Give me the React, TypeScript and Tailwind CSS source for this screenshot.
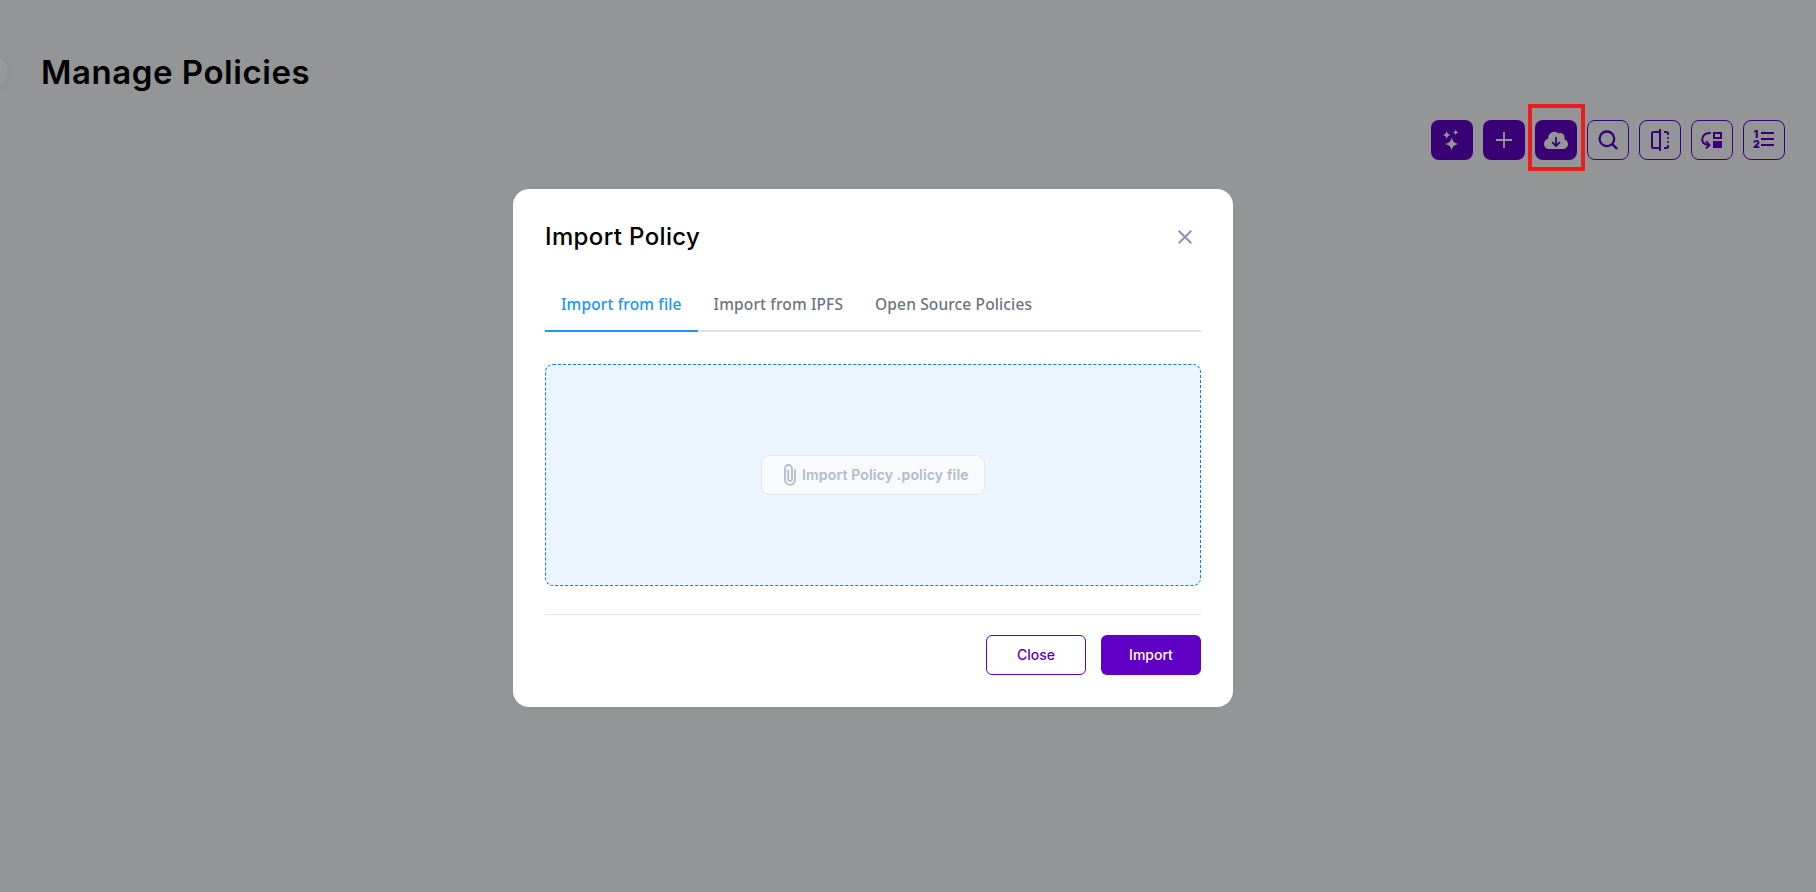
import type { ReactNode } from 'react';

const line = {
  fill: 'none',
  stroke: 'currentColor',
  strokeWidth: 2,
} as const;

function Icon({ children }: { children: ReactNode }) {
  return (
    <svg className="size-6 shrink-0" viewBox="0 0 24 24" fill="currentColor">
      {children}
    </svg>
  );
}

function SparklesIcon() {
  return (
    <Icon>
      <path d="M11.7 9.3 C12.8 13.7 13.8 14.9 18.3 16 C13.8 17.1 12.8 18.2 11.7 22.6 C10.6 18.2 9.6 17.1 5.1 16 C9.6 14.9 10.6 13.7 11.7 9.3Z" />
      <path d="M6.7 3 C7.4 5.5 8.2 6.3 10.7 7 C8.2 7.7 7.4 8.5 6.7 11 C6 8.5 5.2 7.7 2.7 7 C5.2 6.3 6 5.5 6.7 3Z" />
      <path d="M15.7 1.4 C16.2 3.3 16.7 3.8 18.6 4.3 C16.7 4.8 16.2 5.3 15.7 7.2 C15.2 5.3 14.7 4.8 12.8 4.3 C14.7 3.8 15.2 3.3 15.7 1.4Z" />
    </Icon>
  );
}

function PlusIcon() {
  return (
    <Icon>
      <path d="M12 4v16M4 12h16" {...line} strokeWidth={1.8} />
    </Icon>
  );
}

function CloudDownloadIcon() {
  return (
    <Icon>
      <path
        fillRule="evenodd"
        d="M5.3 21 C2.3 21 0 18.7 0 15.9 C0 13.3 1.8 11.2 4.2 10.8 C4 6.8 6.8 3.8 10.4 3.8 C12 3.8 13.4 4.4 14.4 5.4 C17.6 4.2 20.6 6.4 20.6 9.4 C20.6 10 20.5 10.6 20.3 11.2 C22.5 11.8 24 13.7 24 16 C24 18.8 21.8 21 19 21Z M11.1 9 V15.7 L8.7 13.4 L7.4 14.7 L12 19.2 L16.6 14.7 L15.3 13.4 L12.9 15.7 V9Z"
      />
    </Icon>
  );
}

function SearchIcon() {
  return (
    <Icon>
      <circle cx="10.9" cy="10.8" r="7.3" {...line} strokeWidth={2.3} />
      <path d="M16.2 16.1 L21.2 21" {...line} strokeWidth={2.4} />
    </Icon>
  );
}

function CompareIcon() {
  return (
    <Icon>
      <path d="M12 1v22" {...line} />
      <path d="M12 4H5.6A1.6 1.6 0 0 0 4 5.6V18.4A1.6 1.6 0 0 0 5.6 20H12" {...line} />
      <path
        d="M16 4H18.4A1.6 1.6 0 0 1 20 5.6V7M20 9.2V10.8M20 13.2V14.8M20 17V18.4A1.6 1.6 0 0 1 18.4 20H16"
        {...line}
      />
    </Icon>
  );
}

function MoveIcon() {
  return (
    <Icon>
      <path d="M10.8 4.9H9.5C5.3 4.9 2.2 7.6 2.2 11.2C2.2 14.4 4.6 16.6 8.5 16.9" {...line} />
      <path d="M6 13.3L9.5 16.9L6 20.5" {...line} />
      <path d="M14 5H21V10H14Z" {...line} />
      <path d="M13 13h9v7h-9z" />
    </Icon>
  );
}

function NumberedListIcon() {
  return (
    <Icon>
      <path d="M9 5h13M9 11h13M9 17h13" {...line} />
      <g className="font-['Inter',sans-serif] text-[10.5px] font-black" aria-hidden="true">
        <text x="1.6" y="9.9">1</text>
        <text x="1.1" y="20.1">2</text>
      </g>
    </Icon>
  );
}

function ToolButton({ solid, children }: { solid?: boolean; children: ReactNode }) {
  return (
    <button
      className={
        solid
          ? 'flex h-10 w-[42px] items-center justify-center rounded-lg bg-[#5f00c4] text-[#f9fafb]'
          : 'flex h-10 w-[42px] items-center justify-center rounded-lg border border-[#5f00c4] text-[#5f00c4]'
      }
    >
      {children}
    </button>
  );
}

function Tab({ active, children }: { active?: boolean; children: ReactNode }) {
  return (
    <button
      className={
        active
          ? '-mb-0.5 h-[54px] border-b-2 border-[#2196f3] px-4 pt-0.5 text-[#2196f3]'
          : '-mb-0.5 h-[54px] border-b-2 border-transparent px-4 pt-0.5 text-[#6c757d]'
      }
    >
      {children}
    </button>
  );
}

function ImportDialog() {
  return (
    <div className="flex h-[518px] w-[720px] flex-col rounded-2xl bg-white px-8 pb-8 pt-6">
      <header className="flex h-12 items-center justify-between">
        <h2 className="text-2xl font-medium tracking-[0.37px] text-black">Import Policy</h2>
        <button className="flex size-8 items-center justify-center text-[#8b93b0]" aria-label="Close dialog">
          <svg className="size-[14px]" viewBox="0 0 14 14">
            <path d="M.7.7l12.6 12.6M13.3.7L.7 13.3" {...line} />
          </svg>
        </button>
      </header>

      <nav className="mt-[17px] flex h-[54px] border-b-2 border-[#dee2e6] font-['Noto_Sans',sans-serif] text-[15.5px] font-medium tracking-[0.13px]">
        <Tab active>Import from file</Tab>
        <Tab>Import from IPFS</Tab>
        <Tab>Open Source Policies</Tab>
      </nav>

      <div className="mt-8 flex h-[222px] items-center justify-center rounded-lg border border-dashed border-[#0681ee] bg-[#eaf5ff]">
        <button className="flex h-10 w-56 items-center rounded-lg border border-[#e1e7ef] bg-[#f9fafb] pl-[22px] text-sm font-semibold tracking-[0.17px] text-[#afbdcc]">
          <svg className="h-[22px] w-3 shrink-0" viewBox="0 0 12 22">
            <path
              d="M11 5.5V15.8A5 5 0 0 1 1 15.8V4.5A3.5 3.5 0 0 1 8 4.5V15A1.9 1.9 0 0 1 4.2 15V5.5"
              {...line}
              strokeWidth={1.8}
            />
          </svg>
          <span className="ml-1.5 whitespace-nowrap">Import Policy .policy file</span>
        </button>
      </div>

      <footer className="mt-7 flex justify-end gap-[15px] border-t border-[#e1e7ef] pt-5 text-sm font-medium">
        <button className="h-10 w-[100px] rounded-md border border-[#5f00c4] text-[#5f00c4]">Close</button>
        <button className="h-10 w-[100px] rounded-md bg-[#5f00c4] text-white">Import</button>
      </footer>
    </div>
  );
}

export default function App() {
  return (
    <div className="h-screen overflow-hidden bg-[#f7f9fc] font-['Inter',sans-serif]">
      <div className="absolute -left-6 top-[55px] size-8 rounded-full bg-white shadow-[0_0_14px_rgba(0,0,0,0.08)]" />
      <main className="px-[31px] pt-12">
        <h1 className="ml-2.5 h-12 text-[33px] font-semibold leading-[48px] tracking-[0.55px] text-black">
          Manage Policies
        </h1>
        <div className="mt-6 flex justify-end gap-2.5">
          <ToolButton solid><SparklesIcon /></ToolButton>
          <ToolButton solid><PlusIcon /></ToolButton>
          <div className="relative">
            <ToolButton solid><CloudDownloadIcon /></ToolButton>
            <div className="absolute -left-[7px] -top-4 z-20 h-[67px] w-[57px] border-4 border-[#ea1c1c]" />
          </div>
          <ToolButton><SearchIcon /></ToolButton>
          <ToolButton><CompareIcon /></ToolButton>
          <ToolButton><MoveIcon /></ToolButton>
          <ToolButton><NumberedListIcon /></ToolButton>
        </div>
      </main>
      <div className="fixed inset-0 z-10 flex items-start justify-center bg-black/40 pr-[70px] pt-[189px]">
        <ImportDialog />
      </div>
    </div>
  );
}
